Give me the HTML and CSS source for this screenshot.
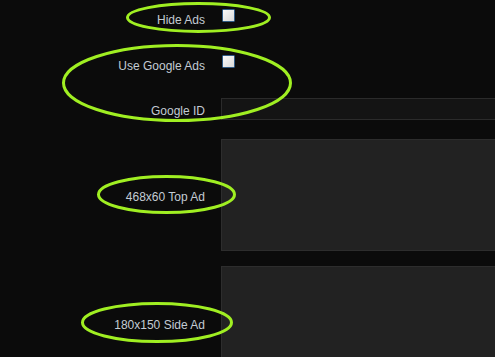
FILE: index.html
```html
<!DOCTYPE html>
<html lang="en">
  <head>
    <meta charset="UTF-8" />
    <meta name="viewport" content="width=device-width, initial-scale=1.0" />
    <title>Ad Settings</title>
    <link rel="stylesheet" href="styles.css">
  </head>
  <body>
    <form id="ad-settings">
      <div class="row row-check">
        <label for="hide-ads">Hide Ads</label>
        <input type="checkbox" id="hide-ads" />
      </div>
      <div class="row row-check row-google">
        <label for="use-google">Use Google Ads</label>
        <input type="checkbox" id="use-google" />
      </div>
      <div class="row row-text">
        <label for="google-id">Google ID</label>
        <input type="text" id="google-id" />
      </div>
      <div class="row row-top">
        <label for="top-ad">468x60 Top Ad</label>
        <textarea id="top-ad"></textarea>
      </div>
      <div class="row row-side">
        <label for="side-ad">180x150 Side Ad</label>
        <textarea id="side-ad"></textarea>
      </div>
    </form>

    <svg class="marks" width="495" height="357" viewBox="0 0 495 357">
      <ellipse cx="198.5" cy="17.5" rx="71" ry="14" />
      <ellipse cx="177" cy="83" rx="113.5" ry="37.5" />
      <ellipse cx="166.5" cy="194.5" rx="68" ry="18" />
      <ellipse cx="157" cy="322.5" rx="74.5" ry="19" />
    </svg>
  </body>
</html>
```

FILE: styles.css
```css
html,
body {
  margin: 0;
  height: 100%;
  overflow: hidden;
}
body {
  position: relative;
  background: #0b0b0b;
  color: #c3cbd4;
  font-family: "Liberation Sans", Arial, sans-serif;
  font-size: 12px;
}
#ad-settings {
  width: 496px;
}
.row {
  display: flex;
  align-items: center;
}
.row label {
  width: 205px;
  padding: 3px 16px 0 0;
  text-align: right;
  flex-shrink: 0;
}
.row-check {
  height: 36px;
}
.row-google {
  margin-top: 10px;
}
.row-check input {
  appearance: none;
  -webkit-appearance: none;
  align-self: flex-start;
  margin: 9px 0 0 1px;
  width: 13px;
  height: 13px;
  border: 1px solid #2f5a85;
  border-radius: 1px;
  background: linear-gradient(135deg, #fafafa, #d9d9d9);
  box-sizing: border-box;
}
.row-text {
  margin-top: 16px;
}
.row-text input {
  width: 275px;
  height: 22px;
  margin: 0;
  padding: 0 4px;
  box-sizing: border-box;
  background: #141414;
  border: 1px solid #2b2b2b;
  color: #c3cbd4;
}
textarea {
  width: 275px;
  margin: 0;
  box-sizing: border-box;
  background: #222;
  border: 1px solid #2d2d2d;
  resize: none;
}
.row-top {
  margin-top: 19px;
}
.row-top textarea {
  height: 112px;
}
.row-side {
  margin-top: 15px;
}
.row-side textarea {
  height: 114px;
}
.marks {
  position: absolute;
  top: 0;
  left: 0;
  pointer-events: none;
}
.marks ellipse {
  fill: none;
  stroke: #a0ef22;
  stroke-width: 3;
}
```
